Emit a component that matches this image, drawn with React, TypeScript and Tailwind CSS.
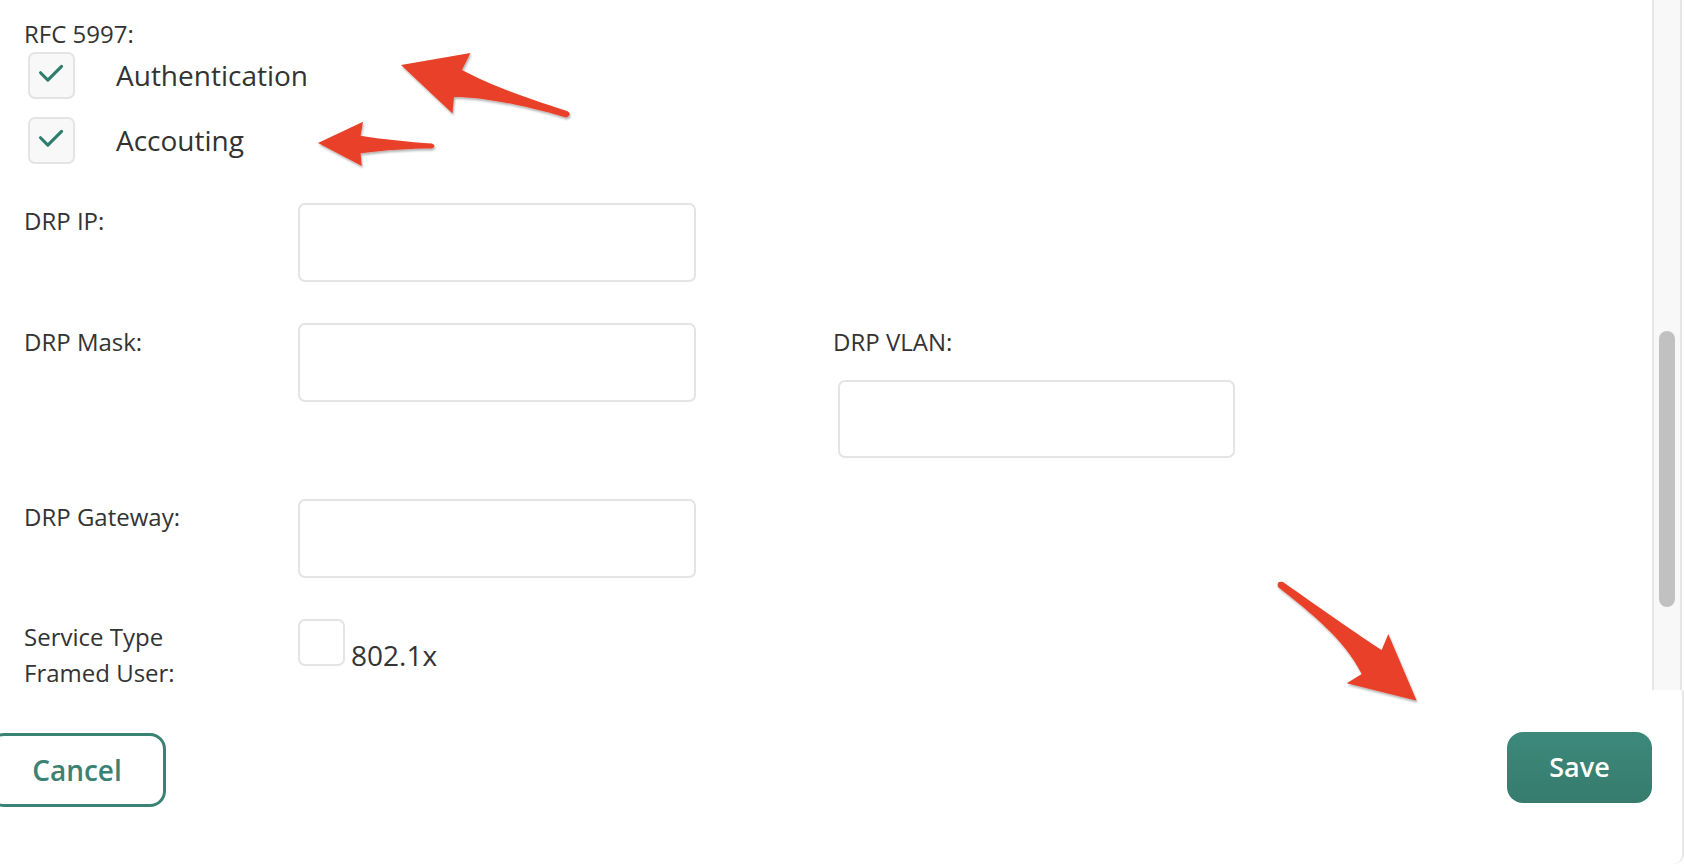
import React from 'react'

function Check({ checked }: { checked?: boolean }) {
  return (
    <div
      className={`h-[47px] w-[47px] shrink-0 rounded-[7px] border-2 border-[#e4e4e4] ${
        checked ? 'bg-[#f8f8f8]' : 'bg-white'
      }`}
    >
      {checked && (
        <svg viewBox="0 0 47 47" className="h-full w-full">
          <path
            d="M11.5 20.5 L19.5 28.5 L34.5 13.5"
            fill="none"
            stroke="#2f7d6c"
            strokeWidth="3.4"
            strokeLinecap="round"
            strokeLinejoin="round"
          />
        </svg>
      )}
    </div>
  )
}

function Field() {
  return <div className="h-[79px] w-[398px] shrink-0 rounded-[7px] border-2 border-[#e4e4e4] bg-white" />
}

function Arrows() {
  return (
    <svg className="pointer-events-none absolute inset-0 h-full w-full" viewBox="0 0 1684 864">
      <defs>
        <filter id="shade" x="-20%" y="-20%" width="140%" height="140%">
          <feDropShadow dx="1" dy="2" stdDeviation="1.2" floodColor="#000" floodOpacity="0.3" />
        </filter>
      </defs>
      <g fill="#e9412a" filter="url(#shade)">
        <path d="M401 65 L470.5 53 L462 70 C486 83 520 96 567 111 Q573 114 566 117.5 C520 104 480 97 454 97 L452.5 113.5 Z" />
        <path d="M318 143 L363 121.7 L360.6 135.7 C380 139 410 142 432 143.5 Q437 146 432 148.5 C410 148.5 385 150 360.6 153.3 L361.8 166 Z" />
        <path d="M1416.7 700.7 L1388.3 634 L1381.7 650 C1360 636 1320 608 1283 582 Q1276 581 1278 587 C1310 612 1345 640 1361.7 674 L1346.7 683.3 Z" />
      </g>
    </svg>
  )
}

export default function App() {
  return (
    <div className="relative h-[864px] w-full overflow-hidden bg-white font-['Open_Sans',sans-serif] text-[#333]">
      {/* Scrolling form body */}
      <div className="flex h-[690px]">
        <div className="flex-1 overflow-hidden pl-[24px] pt-[19px]">
          <div className="text-[24px] leading-[30px]">RFC 5997:</div>

          <div className="mt-[3px] flex flex-col gap-[18px] pl-[4px]">
            <div className="flex items-center">
              <Check checked />
              <span className="-mt-[2px] ml-[41px] text-[28px] leading-[38px]">Authentication</span>
            </div>
            <div className="flex items-center">
              <Check checked />
              <span className="-mt-[2px] ml-[41px] text-[28px] leading-[38px]">Accouting</span>
            </div>
          </div>

          <div className="mt-[39px] flex flex-col gap-[41px] text-[24px] leading-[30px]">
            <div className="flex items-start">
              <label className="w-[274px] shrink-0 pt-[3px]">DRP IP:</label>
              <Field />
            </div>

            <div className="flex items-start">
              <label className="w-[274px] shrink-0 pt-[4px]">DRP Mask:</label>
              <Field />
              <div className="ml-[137px] flex flex-col pt-[4px]">
                <label>DRP VLAN:</label>
                <div className="ml-[5px] mt-[23px] h-[78px] w-[397px] rounded-[7px] border-2 border-[#e4e4e4] bg-white" />
              </div>
            </div>

            <div className="flex items-start">
              <label className="w-[274px] shrink-0 pt-[3px]">DRP Gateway:</label>
              <Field />
            </div>

            <div className="flex items-start">
              <label className="w-[274px] shrink-0 leading-[36px]">
                Service Type
                <br />
                Framed User:
              </label>
              <Check />
              <span className="ml-[6px] mt-[17px] text-[28px] leading-[38px]">802.1x</span>
            </div>
          </div>
        </div>

        {/* Scrollbar */}
        <div className="mr-[2px] flex w-[30px] justify-center border-x-2 border-[#e6e6e6] bg-[#f8f8f8] pt-[331px]">
          <div className="h-[276px] w-[16px] rounded-full bg-[#c1c1c1]" />
        </div>
      </div>

      {/* Footer */}
      <div className="flex h-[174px] items-start justify-between rounded-br-[10px] border-r-2 border-[#e8e8e8] pr-[30px] pt-[42px]">
        <button className="-ml-[12px] mt-[1px] h-[74px] w-[178px] rounded-[16px] border-[3px] border-[#3a8274] text-[28px] font-semibold text-[#3a8274]">
          Cancel
        </button>
        <button className="h-[71px] w-[145px] rounded-[16px] bg-gradient-to-b from-[#3c897b] to-[#367b6e] text-[27px] font-semibold text-white">
          Save
        </button>
      </div>

      <Arrows />
    </div>
  )
}
